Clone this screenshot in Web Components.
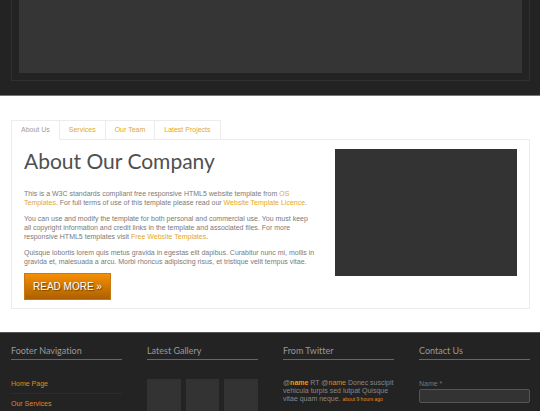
<!DOCTYPE html>
<html lang="en">
<head>
<meta charset="utf-8">
<title>About Our Company</title>
<style>
html, body { margin: 0; }
body { background: #fff; color: #7a7a7a; font: 7px/9px "Liberation Sans", Arial, sans-serif; }
a { color: #e5a91a; text-decoration: none; }
site-footer a { color: #e68619; }
site-footer .reply { color: #ff9900; font-weight: bold; }
p { margin: 0; }
</style>
</head>
<body>
<site-page>
  <hero-frame></hero-frame>
  <company-tabs>
    <tab-button slot="tab" selected>About Us</tab-button>
    <tab-button slot="tab">Services</tab-button>
    <tab-button slot="tab">Our Team</tab-button>
    <tab-button slot="tab">Latest Projects</tab-button>
    <company-intro>
      <span slot="title">About Our Company</span>
      <p>This is a W3C standards compliant free responsive HTML5 website template from <a href="#os">OS<br>Templates</a>. For full terms of use of this template please read our <a href="#licence">Website Template Licence</a>.</p>
      <p>You can use and modify the template for both personal and commercial use. You must keep<br>all copyright information and credit links in the template and associated files. For more<br>responsive HTML5 templates visit <a href="#free">Free Website Templates</a>.</p>
      <p>Quisque lobortis lorem quis metus gravida in egestas elit dapibus. Curabitur nunc mi, mollis in<br>gravida et, malesuada a arcu. Morbi rhoncus adipiscing risus, et tristique velit tempus vitae.</p>
      <cta-link slot="action" href="#more">READ MORE »</cta-link>
    </company-intro>
  </company-tabs>
  <site-footer>
    <footer-column>
      <span slot="title">Footer Navigation</span>
      <footer-nav><a href="#home">Home Page</a><a href="#services">Our Services</a></footer-nav>
    </footer-column>
    <footer-column>
      <span slot="title">Latest Gallery</span>
      <thumb-grid></thumb-grid>
    </footer-column>
    <footer-column>
      <span slot="title">From Twitter</span>
      <tweet-item>@<a class="reply" href="#name">name</a> RT @<a href="#name">name</a> Donec suscipit<br>vehicula turpis sed lutpat Quisque<br>vitae quam neque. <a slot="time" href="#tweet">about 9 hours ago</a></tweet-item>
    </footer-column>
    <footer-column>
      <span slot="title">Contact Us</span>
      <contact-field></contact-field>
    </footer-column>
  </site-footer>
</site-page>
<script>
const define = (name, html, setup) => {
  const template = document.createElement('template');
  template.innerHTML = html;
  customElements.define(name, class extends HTMLElement {
    constructor() {
      super();
      this.attachShadow({ mode: 'open' }).append(template.content.cloneNode(true));
    }
    connectedCallback() { if (setup) setup(this, this.shadowRoot); }
  });
};

define('site-page', `<style>
:host { display: flex; flex-direction: column; }
</style><slot></slot>`);

define('hero-frame', `<style>
:host { display: block; padding: 0 10px 14px 11px; background: #232323; border-bottom: 1px solid #777; }
.frame { border: 1px solid #303030; border-top: 0; padding: 0 7px 7px; }
.slide { height: 73px; background: #353535; }
</style><div class="frame"><div class="slide"></div></div>`);

define('company-tabs', `<style>
:host { display: block; padding: 24px 10px 23px 11px; }
.tabs { display: flex; border-left: 1px solid #ececec; width: max-content; }
.panel { border: 1px solid #ececec; padding: 9px 12px 8px; margin-top: -1px; }
</style><div class="tabs" role="tablist"><slot name="tab"></slot></div><div class="panel" role="tabpanel"><slot></slot></div>`);

define('tab-button', `<style>
:host { display: block; }
button { display: block; margin: 0; font: inherit; color: #e5a91a; background: #fff; padding: 4px 9px 5px; height: 20px; border: solid #ececec; border-width: 1px 1px 1px 0; border-radius: 0; }
:host([selected]) { position: relative; }
:host([selected]) button { color: #9c9c9c; border-bottom-color: #fff; }
</style><button type="button" role="tab"><slot></slot></button>`, (host, root) => {
  root.querySelector('button').setAttribute('aria-selected', host.hasAttribute('selected'));
});

define('company-intro', `<style>
:host { display: grid; grid-template-columns: minmax(0, 285fr) minmax(0, 183fr); gap: 27px; align-items: start; }
h1 { margin: 0 0 16px; font: 21px/24px Lato, sans-serif; color: #505050; white-space: nowrap; }
.copy { display: flex; flex-direction: column; gap: 7px; margin-bottom: 7px; white-space: nowrap; }
.image { height: 127px; background: #333; }
</style><div><h1><slot name="title"></slot></h1><div class="copy"><slot></slot></div><slot name="action"></slot></div><div class="image"></div>`);

define('cta-link', `<style>
:host { display: flex; }
a { box-sizing: border-box; padding: 0 8px; font-size: 10px; line-height: 25px; color: #fff; text-decoration: none; text-shadow: 1px 1px 1px #6b4200; background: linear-gradient(#f58f04, #ad6000); border: 1px solid #c77a10; }
</style><a><slot></slot></a>`, (host, root) => {
  root.querySelector('a').href = host.getAttribute('href');
});

define('site-footer', `<style>
:host { display: grid; grid-template-columns: repeat(4, minmax(0, 1fr)); gap: 25px; padding: 11px 10px 0 11px; background: #232323; border-top: 1px solid #555; color: #777; }
</style><slot></slot>`);

define('footer-column', `<style>
:host { display: block; }
h2 { margin: 0 0 19px; padding-bottom: 2px; font: 9px/13px Lato, sans-serif; font-variant-ligatures: none; color: #999; border-bottom: 1px solid #666; }
</style><h2><slot name="title"></slot></h2><slot></slot>`);

define('footer-nav', `<style>
nav { display: flex; flex-direction: column; }
::slotted(a) { padding-bottom: 5px; margin-bottom: 5px; border-bottom: 1px solid #2d2d2d; }
::slotted(a:last-child) { padding-bottom: 0; margin-bottom: 0; border-bottom: 0; }
</style><nav><slot></slot></nav>`);

define('thumb-grid', `<style>
:host { display: grid; grid-template-columns: repeat(3, 1fr); gap: 5px; }
div { height: 32px; background: #333; }
</style><div></div><div></div><div></div>`);

define('tweet-item', `<style>
:host { display: block; line-height: 8px; white-space: nowrap; color: #888; }
::slotted(a[slot]) { font-size: 5px; color: #ff9900; }
</style><slot></slot><slot name="time"></slot>`);

define('contact-field', `<style>
label { display: block; margin-bottom: 1px; }
input { display: block; box-sizing: border-box; width: 100%; height: 14px; padding: 0 4px; font: inherit; color: #ccc; background: #333; border: 1px solid #555; border-radius: 2px; }
</style><label for="name">Name *</label><input id="name" type="text">`);
</script>
</body>
</html>
